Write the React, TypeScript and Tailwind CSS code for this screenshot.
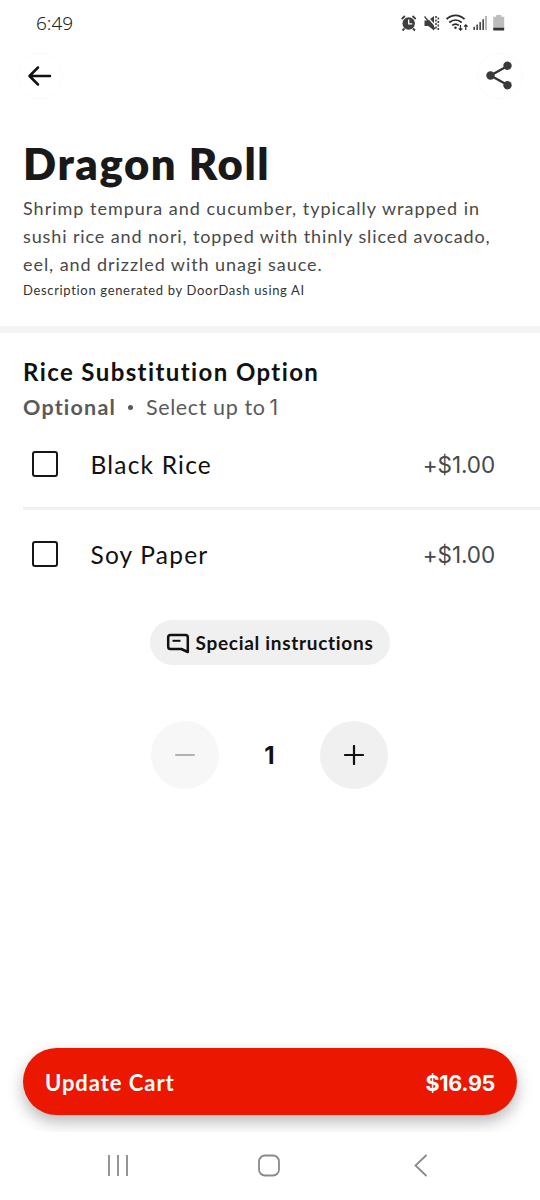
import { useState } from "react";

type Option = {
  name: string;
  price: string;
};

const options: Option[] = [
  { name: "Black Rice", price: "+$1.00" },
  { name: "Soy Paper", price: "+$1.00" },
];

const StatusBar = () => (
  <div className="flex h-[46px] items-center justify-between pl-9 pr-[34px]">
    <span className="font-['Noto_Sans',sans-serif] text-[19px] font-light leading-none text-[#222]">
      6:49
    </span>
    <svg width="106" height="20" viewBox="400 13 106 20" fill="none">
      {/* alarm */}
      <circle cx="408.7" cy="23.5" r="6.2" fill="#3f3f3f" />
      <path
        d="M401.7 19l3.2-3M415.7 19l-3.2-3M404.5 28.5l-2 2M413 28.5l2 2"
        stroke="#3f3f3f"
        strokeWidth="1.8"
      />
      <path d="M408.7 19.5v4.3h3.6" stroke="#fff" strokeWidth="1.3" />
      {/* muted */}
      <path d="M424.5 20.5h3.8l5.7-4.5v14.5l-5.7-4.5h-3.8z" fill="#3f3f3f" />
      <path d="M426 15.5l9 10" stroke="#fff" strokeWidth="1.2" />
      <path d="M424.5 16.5l10.5 12.5" stroke="#3f3f3f" strokeWidth="1.3" />
      <path
        d="M436 16v14M438.3 17.5v13"
        stroke="#3f3f3f"
        strokeWidth="1.6"
        strokeDasharray="2 1.5"
      />
      {/* wifi */}
      <path
        d="M446.5 19.2c5.4-5 12.6-5 18 0M449.3 22.5c3.8-3.3 8.6-3.3 12.4 0M452.2 25.4c2-1.6 4.6-1.6 6.6 0"
        stroke="#2b2b2b"
        strokeWidth="1.8"
      />
      <circle cx="455.5" cy="27.8" r="1.2" fill="#2b2b2b" />
      <path
        d="M460.5 25v5M458.7 28.3l1.8 1.9 1.8-1.9M465.8 30v-5M464 26.7l1.8-1.9 1.8 1.9"
        stroke="#2b2b2b"
        strokeWidth="1.2"
      />
      {/* signal */}
      <path
        d="M474.2 30v-3.2M477.2 30v-5.4M480.2 30v-8M483.2 30v-10.8"
        stroke="#4a4a4a"
        strokeWidth="1.7"
      />
      <path d="M486 30V16" stroke="#aaa" strokeWidth="1.7" />
      {/* battery */}
      <path d="M496.2 15h5v1.7h3v11.8h-11V16.7h3z" fill="#bdbdbd" />
      <path d="M493.2 27.8h11v1.6q0 1.2-1.2 1.2h-8.6q-1.2 0-1.2-1.2z" fill="#333" />
    </svg>
  </div>
);

const OptionRow = ({ option }: { option: Option }) => {
  const [checked, setChecked] = useState(false);

  return (
    <label className="flex h-8 items-center">
      <input
        type="checkbox"
        className="ml-[9px] h-[26px] w-[26px] appearance-none rounded-[3px] border-2 border-[#161616] checked:bg-[#161616]"
        checked={checked}
        onChange={() => setChecked(!checked)}
      />
      <span className="ml-[32.5px] pt-[1px] text-[24.5px] leading-8 tracking-[1.2px] text-[#111]">
        {option.name}
      </span>
      <span className="ml-auto mr-[45px] pt-[2px] font-[Inter,sans-serif] text-[22.5px] leading-8 tracking-[-0.1px] text-[#494949]">
        {option.price}
      </span>
    </label>
  );
};

const App = () => {
  const [count, setCount] = useState(1);

  return (
    <div className="flex h-[1200px] w-[540px] flex-col overflow-hidden bg-white font-[Lato,sans-serif] text-[#111]">
      <StatusBar />

      <header className="flex h-[60px] items-center justify-between px-[17px]">
        <button className="flex h-[46px] w-[46px] items-center justify-center rounded-full border border-[#fbfbfb]">
          <svg className="shrink-0" width="46" height="46" viewBox="17 53 46 46" fill="none">
            <path
              d="M50 76H30M38 67.5L29.5 76l8.5 8.5"
              stroke="#111"
              strokeWidth="2.5"
              strokeLinecap="round"
              strokeLinejoin="round"
            />
          </svg>
        </button>
        <button className="flex h-[46px] w-[46px] items-center justify-center rounded-full border border-[#fbfbfb]">
          <svg className="shrink-0" width="46" height="46" viewBox="477 53 46 46" fill="none">
            <path d="M507.5 66L490.5 75.5l17 9.5" stroke="#333" strokeWidth="2.3" />
            <circle cx="507.5" cy="65.7" r="4.2" fill="#3a3a3a" />
            <circle cx="490.5" cy="75.5" r="4.2" fill="#3a3a3a" />
            <circle cx="507.5" cy="85.2" r="4.2" fill="#3a3a3a" />
          </svg>
        </button>
      </header>

      <section className="h-[220px] px-[23px] pt-[33px]">
        <h1 className="text-[43.5px] font-extrabold leading-[48px] tracking-[1.6px] text-[#191919]">
          Dragon Roll
        </h1>
        <p className="mt-[7px] whitespace-nowrap text-[18px] leading-7 text-[#494949]">
          <span className="block tracking-[1px]">
            Shrimp tempura and cucumber, typically wrapped in
          </span>
          <span className="block tracking-[0.88px]">
            sushi rice and nori, topped with thinly sliced avocado,
          </span>
          <span className="block tracking-[0.94px]">eel, and drizzled with unagi sauce.</span>
        </p>
        <p className="mt-[2px] text-[13px] leading-5 tracking-[0.67px] text-[#333]">
          Description generated by DoorDash using AI
        </p>
      </section>

      <div className="h-[7px] shrink-0 bg-[#f4f4f4]" />

      <section className="h-[261px] pl-[23px] pt-[23px]">
        <h2 className="text-[24px] font-bold leading-8 tracking-[1.4px]">
          Rice Substitution Option
        </h2>
        <div className="flex h-[38px] items-center text-[21.5px] text-[#5a5a5a]">
          <span className="font-bold tracking-[1.2px]">Optional</span>
          <span className="ml-3 mr-[13px] h-[5px] w-[5px] rounded-full bg-[#5a5a5a]" />
          <span className="tracking-[0.6px]">
            Select up to <span className="-ml-0.5 font-[Inter,sans-serif] text-[21px]">1</span>
          </span>
        </div>
        <div className="mt-[22px]">
          <OptionRow option={options[0]} />
        </div>
        <div className="mb-7 mt-[27px] h-[3px] bg-[#f0f0f0]" />
        <OptionRow option={options[1]} />
      </section>

      <div className="mt-[26px] flex justify-center">
        <button className="flex h-[45px] w-[240px] items-center rounded-full bg-[#f0f0f0] pl-4">
          <svg width="24" height="24" viewBox="0 0 24 24" fill="none">
            <path
              d="M4.5 4H19.5q2.3 0 2.3 2.3V21l-6.5-3H4.5q-2.3 0-2.3-2.3V6.3q0-2.3 2.3-2.3z"
              stroke="#111"
              strokeWidth="2.5"
              strokeLinejoin="round"
            />
            <path d="M6.5 9.8h8" stroke="#111" strokeWidth="2" />
          </svg>
          <span className="ml-[5.5px] whitespace-nowrap pt-0.5 text-[19px] font-bold tracking-[0.7px]">
            Special instructions
          </span>
        </button>
      </div>

      <div className="mt-[56px] flex items-center justify-center">
        <button
          className="flex h-[68px] w-[68px] items-center justify-center rounded-full bg-[#f7f7f7]"
          onClick={() => setCount(Math.max(1, count - 1))}
        >
          <span className="h-[2px] w-5 rounded-full bg-[#b2b2b2]" />
        </button>
        <span className="w-[101px] pt-0.5 text-center font-[Inter,sans-serif] text-[24px] font-bold">
          {count}
        </span>
        <button
          className="mr-[1px] flex h-[68px] w-[68px] items-center justify-center rounded-full bg-[#f0f0f0]"
          onClick={() => setCount(count + 1)}
        >
          <svg width="20" height="20" viewBox="0 0 20 20" fill="none">
            <path d="M1 10h18M10 1v18" stroke="#111" strokeWidth="2.2" strokeLinecap="round" />
          </svg>
        </button>
      </div>

      <div className="mt-auto h-[104px] shrink-0 overflow-hidden px-[23px] pt-5">
        <button className="flex h-[67px] w-full items-center justify-between rounded-full bg-[#eb1700] px-[22px] pt-0.5 text-[22px] font-bold text-white shadow-[0_7px_16px_rgba(0,0,0,0.28)]">
          <span className="tracking-[0.95px]">Update Cart</span>
          <span className="pt-[1px] font-[Inter,sans-serif] text-[21.5px] tracking-[-0.3px]">
            $16.95
          </span>
        </button>
      </div>

      <nav className="h-[68px] shrink-0">
        <svg width="540" height="68" viewBox="0 1132 540 68" fill="none" stroke="#8a8a8a" strokeWidth="1.8">
          <path d="M109 1155v21M118 1155v21M127 1155v21" />
          <rect x="259" y="1155.5" width="20" height="20" rx="6" />
          <path d="M426.5 1155l-11 10.5 11 10.5" />
        </svg>
      </nav>
    </div>
  );
};

export default App;
